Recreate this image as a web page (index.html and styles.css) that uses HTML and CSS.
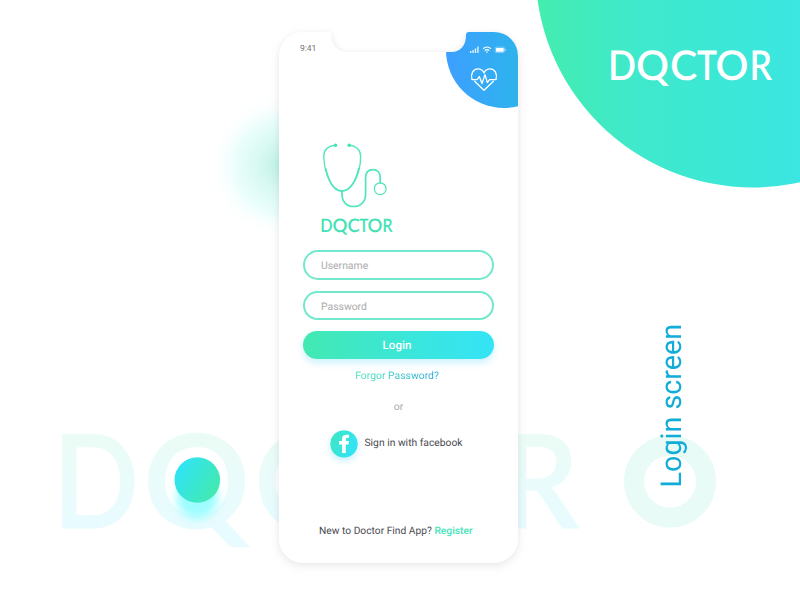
FILE: index.html
```html
<!DOCTYPE html>
<html lang="en">
<head>
<meta charset="utf-8">
<title>Doctor login</title>
<link rel="stylesheet" href="styles.css">
</head>
<body>
<div class="scene">
  <svg class="backdrop" width="800" height="600" viewBox="0 0 800 600" aria-hidden="true">
    <defs>
      <linearGradient id="corner" x1="0" x2="1"><stop offset="0" stop-color="#44edae"/><stop offset=".22" stop-color="#3fe9ca"/><stop offset=".5" stop-color="#3be7da"/><stop offset=".65" stop-color="#3de5e5"/></linearGradient>
      <linearGradient id="pale" gradientUnits="userSpaceOnUse" x1="0" x2="0" y1="434" y2="528"><stop offset="0" stop-color="#ebfcf6"/><stop offset="1" stop-color="#e8fbff"/></linearGradient>
      <radialGradient id="glow"><stop offset="0" stop-color="#bdf2e6"/><stop offset=".3" stop-color="#d6f8f1"/><stop offset=".65" stop-color="#ebfefc"/><stop offset="1" stop-color="#fff" stop-opacity="0"/></radialGradient>
      <linearGradient id="dot" x1="0" y1=".2" x2="1" y2=".8"><stop offset="0" stop-color="#2fe3fb"/><stop offset="1" stop-color="#44eaa9"/></linearGradient>
      <filter id="soft" x="-50%" y="-50%" width="200%" height="200%"><feGaussianBlur stdDeviation="4.5"/></filter>
    </defs>
    <circle cx="753" cy="-30" r="217.500" fill="url(#corner)"/>
    <circle cx="282" cy="166" r="73" fill="url(#glow)"/>
    <g class="brand brand-ghost">
      <text x="53" y="527.500" textLength="86" lengthAdjust="spacingAndGlyphs">D</text>
      <text x="143" y="527.500" textLength="107" lengthAdjust="spacingAndGlyphs">Q</text>
      <text x="254" y="527.500">C</text>
      <text x="501" y="527.500" textLength="78" lengthAdjust="spacingAndGlyphs">R</text>
    </g>
    <circle cx="670" cy="481.500" r="36" fill="none" stroke="#e8fbf7" stroke-width="20"/>
    <circle cx="197.300" cy="498" r="21" fill="#9ffdff" filter="url(#soft)"/>
    <circle cx="197.300" cy="480" r="22.800" fill="url(#dot)"/>
    <text class="brand brand-large" y="80"><tspan x="608" textLength="28" lengthAdjust="spacingAndGlyphs">D</tspan><tspan x="636">Q</tspan><tspan x="670">C</tspan><tspan x="697" textLength="20" lengthAdjust="spacingAndGlyphs">T</tspan><tspan x="715.500">O</tspan><tspan x="749.500" textLength="22.500" lengthAdjust="spacingAndGlyphs">R</tspan></text>
  </svg>

  <main class="phone">
    <svg class="phone-body" width="239" height="531" viewBox="0 0 239 531" aria-hidden="true">
      <defs>
        <path id="shell" d="M24 0H50Q52 0 52 2C52 13 58 20 70 20H172C182 20 187 13 187 3Q187 0 190 0H215A24 24 0 0 1 239 24V507A24 24 0 0 1 215 531H24A24 24 0 0 1 0 507V24A24 24 0 0 1 24 0Z"/>
        <clipPath id="shell-clip"><use href="#shell"/></clipPath>
        <linearGradient id="blue" x1="0" x2="1"><stop offset="0" stop-color="#3d9fff"/><stop offset=".62" stop-color="#2eb3ed"/></linearGradient>
      </defs>
      <use class="shell" href="#shell"/>
      <circle cx="225" cy="18" r="58" fill="url(#blue)" clip-path="url(#shell-clip)"/>
    </svg>

    <div class="status">
      <span class="time">9:41</span>
      <svg width="38" height="9" viewBox="0 0 38 9" fill="#fff">
        <path d="M1 6h1.400v2H1zM3.400 5h1.400v3H3.400zM5.800 3.500h1.400V8H5.800zM8.200 1.500h1.400V8H8.200z" opacity=".85"/>
        <path d="M14 3.700Q18 .3 22 3.700M15.700 5.500Q18 3.700 20.300 5.500" fill="none" stroke="#fff" stroke-width="1.100"/>
        <path d="M16.700 6.500h2.600L18 8z"/>
        <rect x="26.200" y="2.200" width="9.300" height="5.300" rx="1.200" fill="none" stroke="#fff" stroke-opacity=".55" stroke-width=".7"/>
        <rect x="27" y="3" width="7.700" height="3.800" rx=".5"/><path d="M36.300 4h.8v1.800h-.8z" opacity=".7"/>
      </svg>
    </div>
    <svg class="heart" width="28" height="25" viewBox="0 0 28 25" fill="none" stroke="#fff" stroke-width="1.300" stroke-linecap="round" stroke-linejoin="round">
      <path d="M2 12.300C.3 7 3.200 1.800 7.800 1.800 10.800 1.800 13 3.300 14 6 15 3.300 17.200 1.800 20.200 1.800 24.800 1.800 27.700 7 26 12.300M4.600 14.200 14 23.300l9.400-9.100"/>
      <path d="M2 12.600H7.200L9.300 9.500 12 16.500 15 7.600 17.300 15.500 19.500 12.600H26"/>
    </svg>

    <svg class="logo" width="82" height="98" viewBox="0 0 82 98" fill="none" stroke="#4fe5bd">
      <g stroke-linecap="round">
        <path d="M15.500 5.200C8 6.200 3.600 9.500 3.800 16.500 4.300 33 11.500 51 22 51S40.700 33 40.600 16.500C40.600 9.500 36.500 6.200 29.200 5.200" stroke-width="1.300"/>
        <path d="M5.700 28.500C8.800 42 14.500 51 22 51S35.800 42 38.700 28.500" stroke-width="1.500"/>
        <path d="M22 51V54.500C22 62 27 66.500 33.500 66.500 41 66.500 45.600 61.500 45.600 54V38C45.600 32.500 48.500 29.700 53 29.700S60.200 33 60.200 37.500V43" stroke-width="1.700"/>
      </g>
      <circle cx="60.200" cy="48.700" r="5.900" stroke-width="1.200"/>
      <circle cx="15.500" cy="5.200" r="1.800" fill="#3fe4b4" stroke="none"/><circle cx="29.200" cy="5.200" r="1.800" fill="#3fe4b4" stroke="none"/>
      <text class="brand brand-small" y="91.800"><tspan x="0.200" textLength="12.300" lengthAdjust="spacingAndGlyphs">D</tspan><tspan x="12.500">Q</tspan><tspan x="27.500">C</tspan><tspan x="39.300" textLength="9.200" lengthAdjust="spacingAndGlyphs">T</tspan><tspan x="47.500">O</tspan><tspan x="62.500" textLength="10" lengthAdjust="spacingAndGlyphs">R</tspan></text>
    </svg>

    <form class="form">
      <div class="field">Username</div>
      <div class="field">Password</div>
      <div class="login">Login</div>
    </form>
    <div class="forgot"><span>Forgor Password?</span></div>
    <div class="or">or</div>
    <div class="social">
      <svg class="fb" width="28" height="28" viewBox="0 0 28 28">
        <defs><linearGradient id="fbg" x1="0" y1="0" x2="1" y2=".35"><stop offset="0" stop-color="#3ce7c0"/><stop offset="1" stop-color="#34e3f4"/></linearGradient></defs>
        <circle cx="14" cy="14" r="13.800" fill="url(#fbg)"/>
        <path d="M12 23V14.500H9V11H12V9C12 6.300 13.500 4.800 16.200 4.800H19V8H17.200C16.200 8 15.800 8.500 15.800 9.500V11H19L18.500 14.500H15.800V23Z" fill="#fff"/>
      </svg>
      <span>Sign in with facebook</span>
    </div>
    <div class="signup">New to Doctor Find App? <b>Register</b></div>
  </main>

  <div class="caption">Login screen</div>
</div>
</body>
</html>
```
FILE: styles.css
```css
* { box-sizing: border-box; }
body { margin: 0; background: #fff; font-family: Roboto, sans-serif; text-rendering: geometricPrecision; }
.scene {
  position: relative;
  width: 800px;
  height: 600px;
  overflow: hidden;
  display: grid;
  grid-template-columns: 279px 239px 1fr;
}
.backdrop { position: absolute; left: 0; top: 0; }
.brand { font-family: Lato, sans-serif; stroke: none; }
.brand-ghost { font-size: 130px; font-weight: 600; fill: url(#pale); }
.brand-large { font-size: 41px; font-weight: 600; fill: #fff; }
.brand-small { font-size: 18.5px; font-weight: 600; fill: #42e2b4; }
.brand-ghost text { stroke: url(#pale); stroke-width: 1px; }

.phone {
  grid-column: 2;
  position: relative;
  height: 531px;
  margin-top: 32px;
  display: flex;
  flex-direction: column;
}
.phone > * { position: relative; flex: none; }
.phone > .phone-body {
  position: absolute;
  left: 0;
  top: 0;
  overflow: visible;
}
.shell { fill: #fff; filter: drop-shadow(0 3px 5px rgba(0, 0, 0, .08)) drop-shadow(0 0 3px rgba(0, 0, 0, .03)); }
.status {
  height: 20px;
  padding: 12px 11px 0 21px;
  display: flex;
  justify-content: space-between;
  align-items: flex-start;
}
.status svg { margin-top: 1px; }
.time { font-size: 8.5px; line-height: 11px; color: #777; }
.heart { align-self: flex-end; margin: 15px 20px 0 0; }
.logo { margin: 48px 0 0 41px; overflow: visible; }

.form {
  margin: 12px 24px 0;
  display: flex;
  flex-direction: column;
  gap: 11px;
}
.field {
  height: 29.5px;
  border: 2px solid #72e9cc;
  border-radius: 15px;
  padding-left: 16px;
  font-size: 10.4px;
  line-height: 27px;
  color: #aaa;
}
.login {
  height: 28px;
  border-radius: 14px;
  background: linear-gradient(90deg, #43e9b1, #3be6da 55%, #34e4f6);
  box-shadow: 0 4px 7px rgba(60, 200, 250, .25);
  color: #fff;
  font-size: 11.6px;
  font-weight: 500;
  line-height: 28px;
  padding-right: 3px;
  text-align: center;
}
.forgot, .or { text-align: center; font-size: 10.4px; line-height: 14px; }
.forgot { margin: 10px 3px 0 0; }
.forgot span {
  background: linear-gradient(90deg, #48e5b5, #27a8dc);
  background-clip: text;
  -webkit-background-clip: text;
  color: transparent;
}
.or { margin-top: 17px; color: #aaa; }
.social {
  margin: 16px 0 0 51px;
  display: flex;
  gap: 6.5px;
  font-size: 10.3px;
  line-height: 25px;
  color: #4a4a52;
}
.fb { border-radius: 50%; box-shadow: 0 3px 6px rgba(60, 200, 250, .28); }
.signup {
  margin: 66px 0 0 40px;
  white-space: nowrap;
  font-size: 10.25px;
  line-height: 14px;
  color: #4a4a52;
}
.signup b { font-weight: 500; color: #47e4bb; }
.caption {
  position: relative;
  justify-self: start;
  align-self: start;
  margin: 324px 0 0 136px;
  writing-mode: vertical-rl;
  transform: rotate(180deg);
  font-size: 28.7px;
  line-height: 36px;
  white-space: nowrap;
  color: #12acd8;
}
```
